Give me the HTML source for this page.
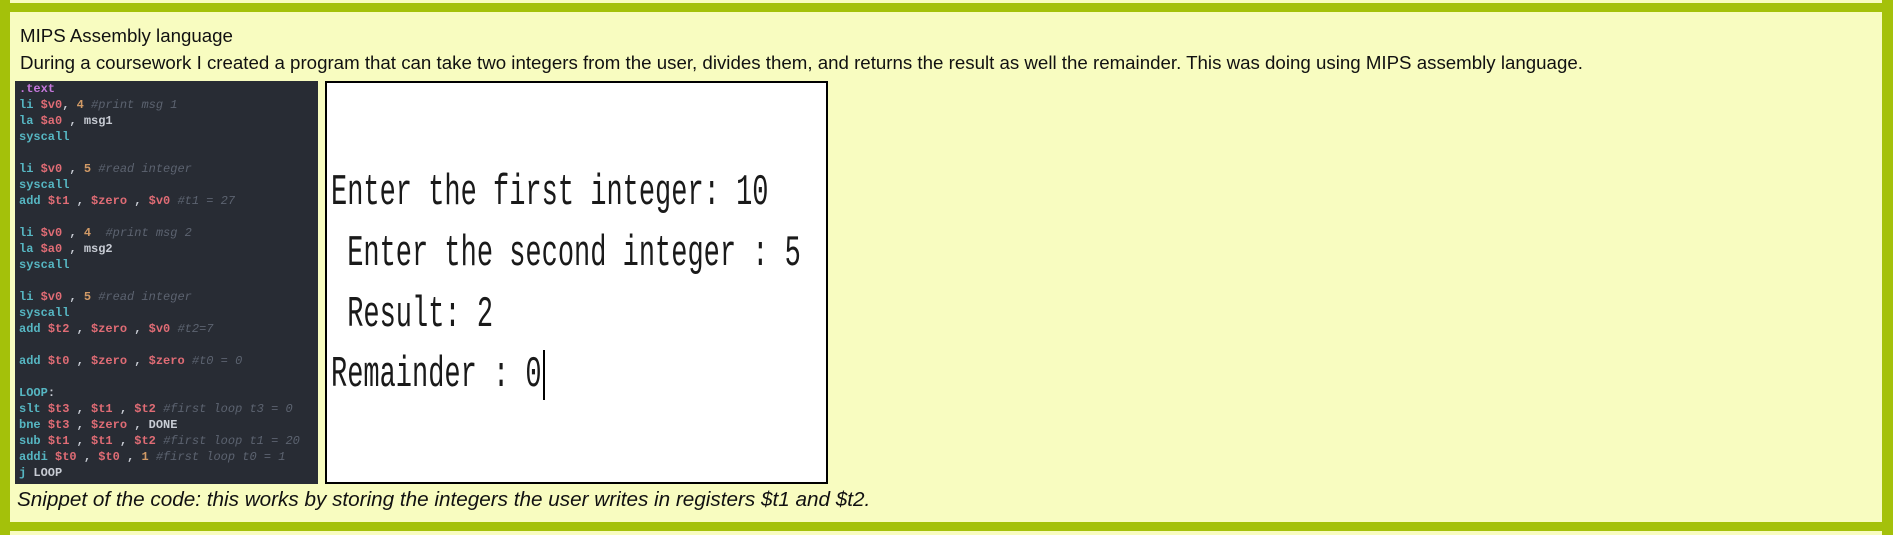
<!DOCTYPE html>
<html><head><style>
body{margin:0;width:1893px;height:535px;background:#f8fcc0;position:relative;overflow:hidden;font-family:"Liberation Sans",sans-serif;}
.g{position:absolute;background:#a4c10a;}
.code{position:absolute;left:15px;top:81px;width:303px;height:403px;background:#282c34;font-family:"Liberation Mono",monospace;font-size:12px;font-weight:bold;line-height:16px;box-sizing:border-box;overflow:hidden;}
.code div{height:16px;padding-left:4px;white-space:pre;}
.k{color:#56b6c2}.r{color:#e06c75}.n{color:#d19a66}.c{color:#5c6370;font-style:italic;font-weight:normal}.p{color:#c678dd}.w{color:#c8ccd4}
.img{position:absolute;left:325px;top:81px;width:503px;height:403px;border:2px solid #000;box-sizing:border-box;background:#fff;overflow:hidden;}
.img div{position:absolute;left:4px;font-family:"Liberation Mono",monospace;font-size:27px;line-height:27px;height:27px;color:#1a1a1a;white-space:pre;transform:scaleY(1.6);transform-origin:left bottom;}
</style></head><body>
<div class="g" style="left:0;top:3px;width:1893px;height:9px"></div>
<div class="g" style="left:0;top:0;width:10px;height:535px"></div>
<div class="g" style="left:1882px;top:0;width:11px;height:535px"></div>
<div class="g" style="left:0;top:522px;width:1893px;height:9px"></div>
<div style="position:absolute;left:20px;top:25px;font-size:18.7px;color:#111">MIPS Assembly language</div>
<div style="position:absolute;left:20px;top:52px;font-size:18.7px;color:#111">During a coursework I created a program that can take two integers from the user, divides them, and returns the result as well the remainder. This was doing using MIPS assembly language.</div>
<div class="code">
<div class="p">.text</div>
<div><span class="k">li </span><span class="r">$v0</span><span class="w">, </span><span class="n">4 </span><span class="c">#print msg 1</span></div>
<div><span class="k">la </span><span class="r">$a0 </span><span class="w">, msg1</span></div>
<div class="k">syscall</div>
<div></div>
<div><span class="k">li </span><span class="r">$v0 </span><span class="w">, </span><span class="n">5 </span><span class="c">#read integer</span></div>
<div class="k">syscall</div>
<div><span class="k">add </span><span class="r">$t1 </span><span class="w">, </span><span class="r">$zero </span><span class="w">, </span><span class="r">$v0 </span><span class="c">#t1 = 27</span></div>
<div></div>
<div><span class="k">li </span><span class="r">$v0 </span><span class="w">, </span><span class="n">4  </span><span class="c">#print msg 2</span></div>
<div><span class="k">la </span><span class="r">$a0 </span><span class="w">, msg2</span></div>
<div class="k">syscall</div>
<div></div>
<div><span class="k">li </span><span class="r">$v0 </span><span class="w">, </span><span class="n">5 </span><span class="c">#read integer</span></div>
<div class="k">syscall</div>
<div><span class="k">add </span><span class="r">$t2 </span><span class="w">, </span><span class="r">$zero </span><span class="w">, </span><span class="r">$v0 </span><span class="c">#t2=7</span></div>
<div></div>
<div><span class="k">add </span><span class="r">$t0 </span><span class="w">, </span><span class="r">$zero </span><span class="w">, </span><span class="r">$zero </span><span class="c">#t0 = 0</span></div>
<div></div>
<div class="k">LOOP<span class="w">:</span></div>
<div><span class="k">slt </span><span class="r">$t3 </span><span class="w">, </span><span class="r">$t1 </span><span class="w">, </span><span class="r">$t2 </span><span class="c">#first loop t3 = 0</span></div>
<div><span class="k">bne </span><span class="r">$t3 </span><span class="w">, </span><span class="r">$zero </span><span class="w">, DONE</span></div>
<div><span class="k">sub </span><span class="r">$t1 </span><span class="w">, </span><span class="r">$t1 </span><span class="w">, </span><span class="r">$t2 </span><span class="c">#first loop t1 = 20</span></div>
<div><span class="k">addi </span><span class="r">$t0 </span><span class="w">, </span><span class="r">$t0 </span><span class="w">, </span><span class="n">1 </span><span class="c">#first loop t0 = 1</span></div>
<div><span class="k">j </span><span class="w">LOOP</span></div>
</div>
<div class="img">
<div style="top:107px">Enter the first integer: 10</div>
<div style="top:168px"> Enter the second integer : 5</div>
<div style="top:229px"> Result: 2</div>
<div style="top:289px">Remainder : 0</div>
<span style="position:absolute;left:216px;top:267px;width:2px;height:50px;background:#000"></span>
</div>
<div style="position:absolute;left:17px;top:488px;font-size:20.7px;font-style:italic;color:#111">Snippet of the code: this works by storing the integers the user writes in registers $t1 and $t2.</div>
</body></html>
